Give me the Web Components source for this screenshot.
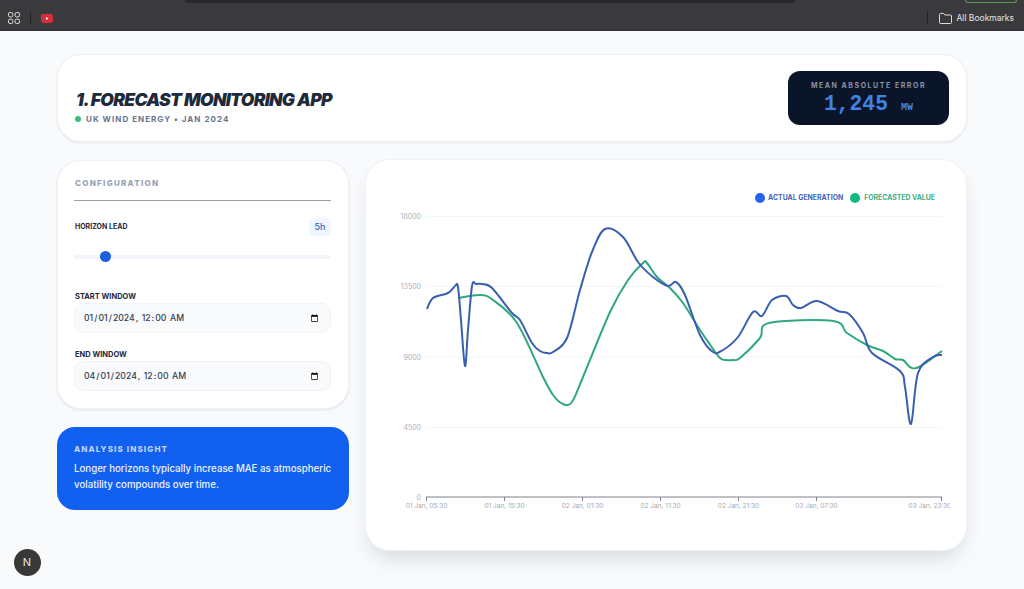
<!DOCTYPE html>
<html lang="en-US">
<head>
<meta charset="utf-8">
<title>Forecast Monitoring App</title>
<style>
  html, body { margin: 0; height: 589px; overflow: hidden; background: #f8fafc; font-family: Inter, "Liberation Sans", sans-serif; }
</style>
</head>
<body>
<bookmark-bar></bookmark-bar>
<app-page>
  <app-header title="1. FORECAST MONITORING APP" subtitle="UK WIND ENERGY • JAN 2024"></app-header>
  <div slot="side">
    <config-panel></config-panel>
    <insight-card heading="ANALYSIS INSIGHT">Longer horizons typically increase MAE as atmospheric volatility compounds over time.</insight-card>
  </div>
  <forecast-chart slot="main"></forecast-chart>
</app-page>
<dev-badge></dev-badge>

<script>
// browser chrome on top of the page
class BookmarkBar extends HTMLElement {
  connectedCallback() {
    this.attachShadow({ mode: 'open' }).innerHTML = `
      <style>
        :host { display: block; height: 31px; overflow: hidden; background: #3a3a3c; box-sizing: border-box; border-bottom: 1px solid #333335; color: #e4e4e6; font: 400 8.5px Inter, "Liberation Sans", sans-serif; }
        .strip { display: flex; height: 3px; }
        .omni { margin-left: 185px; width: 610px; background: #29292b; border-radius: 0 0 5px 5px; }
        .update { margin-left: 170px; width: 52px; height: 3px; box-sizing: border-box; border: 1px solid #5a9a5a; border-top: 0; border-radius: 0 0 3px 3px; }
        .row { display: flex; align-items: center; height: 26px; margin-top: 2px; padding: 0 10px 0 8px; }
        .sep { width: 1px; height: 12px; background: #222224; }
        .grow { flex: 1; }
        svg { display: block; }
      </style>
      <div class="strip"><div class="omni"></div><div class="update"></div></div>
      <div class="row">
        <svg width="12" height="12" viewBox="0 0 12 12" fill="none" stroke="#dcdcde" stroke-width="1">
          <rect x=".5" y=".5" width="4.4" height="4.4" rx="1.5"/><rect x="7.1" y=".5" width="4.4" height="4.4" rx="1.5"/>
          <rect x=".5" y="7.1" width="4.4" height="4.4" rx="1.5"/><rect x="7.1" y="7.1" width="4.4" height="4.4" rx="1.5"/>
        </svg>
        <div class="sep" style="margin-left:10px"></div>
        <svg style="margin-left:10px" width="12" height="9" viewBox="0 0 12 9">
          <rect width="12" height="9" rx="2.4" fill="#d92c3a"/><path d="M5 3l2.4 1.5L5 6z" fill="#fff"/>
        </svg>
        <div class="grow"></div>
        <div class="sep"></div>
        <svg style="margin-left:11px" width="13" height="11" viewBox="0 0 13 11" fill="none" stroke="#dcdcde" stroke-width="1">
          <path d="M.5 2V9.5a1 1 0 0 0 1 1h10a1 1 0 0 0 1-1V3a1 1 0 0 0-1-1H6L4.6.5H1.5a1 1 0 0 0-1 1z"/>
        </svg>
        <span style="margin-left:5px">All Bookmarks</span>
      </div>`;
  }
}

class AppPage extends HTMLElement {
  connectedCallback() {
    this.attachShadow({ mode: 'open' }).innerHTML = `
      <style>
        :host { display: block; padding: 23px 57px 0; }
        .cols { display: grid; grid-template-columns: 292px 600px; gap: 17px; margin-top: 18px; }
      </style>
      <slot></slot>
      <div class="cols"><slot name="side"></slot><slot name="main"></slot></div>`;
  }
}

class AppHeader extends HTMLElement {
  connectedCallback() {
    this.attachShadow({ mode: 'open' }).innerHTML = `
      <style>
        :host { display: flex; align-items: center; justify-content: space-between; box-sizing: border-box; width: 910px; height: 88px; padding: 0 17px 0 18px; background: #fff; border: 1px solid #eef1f5; border-radius: 24px; box-shadow: 0 1px 3px rgba(15,23,42,.08); }
        .head { padding-top: 19px; }
        h1 { margin: 0; font: italic 900 17.5px/20px Inter, "Liberation Sans", sans-serif; letter-spacing: -.04em; color: #1e293b; }
        .sub { display: flex; align-items: center; gap: 5px; margin-top: 3px; font: 700 8px/12px Inter, "Liberation Sans", sans-serif; letter-spacing: .13em; color: #64748b; }
        .dot { width: 6px; height: 6px; margin-left: -1px; border-radius: 50%; background: #34c17b; }
        .mae { box-sizing: border-box; width: 161px; height: 54px; padding-top: 10px; background: #0b1529; border-radius: 12px; text-align: center; }
        .mae small { display: block; font: 700 7px/9px Inter, "Liberation Sans", sans-serif; letter-spacing: .22em; color: #8a94a6; }
        .val { margin-top: 2px; font: 700 21.3px/24px "Liberation Mono", monospace; color: #3f83e6; }
        .val span { margin-left: 13px; font-size: 10px; }
      </style>
      <div class="head">
        <h1>${this.getAttribute('title')}</h1>
        <div class="sub"><i class="dot"></i>${this.getAttribute('subtitle')}</div>
      </div>
      <div class="mae"><small>MEAN ABSOLUTE ERROR</small><div class="val">1,245<span>MW</span></div></div>`;
  }
}

class DateField extends HTMLElement {
  connectedCallback() {
    this.attachShadow({ mode: 'open' }).innerHTML = `
      <style>
        :host { display: block; }
        label { display: block; padding-left: 1px; font: 700 7.5px/10px Inter, "Liberation Sans", sans-serif; color: #1e293b; margin-bottom: 1px; }
        input { display: block; box-sizing: border-box; width: 257px; height: 30px; padding: 0 9px 0 8px; background: #f8fafc; border: 1px solid #f1f3f6; border-radius: 10px; outline: 0; color: #334155; font: 500 8.7px Inter, "Liberation Sans", sans-serif; }
      </style>
      <label>${this.getAttribute('label')}</label>
      <input type="datetime-local" value="${this.getAttribute('value')}">`;
  }
}

class ConfigPanel extends HTMLElement {
  connectedCallback() {
    this.attachShadow({ mode: 'open' }).innerHTML = `
      <style>
        :host { display: block; box-sizing: border-box; height: 249px; padding: 16px 17px 17px 16px; background: #fff; border: 1px solid #eef1f5; border-radius: 24px; box-shadow: 0 1px 3px rgba(15,23,42,.1); }
        h2 { margin: 0; padding: 0 0 11px 1px; border-bottom: 1px solid #9a9ea6; font: 800 8px/12px Inter, "Liberation Sans", sans-serif; letter-spacing: .16em; color: #94a3b8; }
        .lead { display: flex; align-items: center; justify-content: space-between; margin-top: 17px; padding-left: 1px; font: 700 7px/10px Inter, "Liberation Sans", sans-serif; color: #1e293b; }
        .lead b { width: 22px; height: 18px; border-radius: 5px; background: #eff6ff; color: #2f5fc0; font: 500 9px/18px Inter, "Liberation Sans", sans-serif; text-align: center; }
        input { -webkit-appearance: none; appearance: none; display: block; width: 257px; height: 11px; margin: 15px 0 0; background: none; outline: 0; }
        input::-webkit-slider-runnable-track { height: 4px; border-radius: 2px; background: #f1f5f9; }
        input::-webkit-slider-thumb { -webkit-appearance: none; width: 11px; height: 11px; margin-top: -3.5px; border-radius: 50%; background: #1d5fe0; }
        .start { margin-top: 30px; }
        .end { margin-top: 17px; }
      </style>
      <h2>CONFIGURATION</h2>
      <div class="lead"><span>HORIZON LEAD</span><b>5h</b></div>
      <input type="range" min="0" max="48" value="5">
      <date-field class="start" label="START WINDOW" value="2024-01-01T00:00"></date-field>
      <date-field class="end" label="END WINDOW" value="2024-04-01T00:00"></date-field>`;
  }
}

class InsightCard extends HTMLElement {
  connectedCallback() {
    this.attachShadow({ mode: 'open' }).innerHTML = `
      <style>
        :host { display: block; box-sizing: border-box; height: 83px; margin-top: 18px; padding: 17px 17px 0; background: #1260f0; border-radius: 18px; color: #eaf1ff; }
        h3 { margin: 0 0 6px; font: 800 8px/11px Inter, "Liberation Sans", sans-serif; letter-spacing: .14em; color: #bcd3fb; }
        p { margin: 0; font: 500 9.7px/16px Inter, "Liberation Sans", sans-serif; }
      </style>
      <h3>${this.getAttribute('heading')}</h3>
      <p><slot></slot></p>`;
  }
}

// points read off in page pixels, the svg viewBox below uses the same numbers
const ACTUAL = [[427,309],[433,298],[448,293],[455,286],[458,287],[461,320],[465,366],[468,330],[472,286],[476,284],[482,284],[492,288],[512,313],[520,320],[532,343],[540,351],[547,353],[553,352],[567,338],[580,290],[592,252],[605,229],[623,237],[638,262],[653,277],[668,286],[676,282],[685,295],[700,335],[713,352],[723,350],[738,337],[753,312],[762,316],[772,300],[786,296],[793,305],[801,308],[817,301],[838,311],[849,314],[863,333],[872,353],[900,371],[905,387],[911,424],[918,373],[933,357],[942,355]];
const FORECAST = [[458,298],[480,295],[493,300],[517,323],[543,377],[553,395],[563,404],[572,402],[583,377],[610,312],[628,280],[643,263],[647,263],[657,277],[670,288],[683,303],[700,330],[711,346],[720,358],[726,360],[733,360],[740,358],[760,338],[769,323],[833,321],[847,333],[867,345],[883,351],[895,359],[903,360],[910,367],[919,367],[942,351]];

function smoothPath(pts) {
  let d = `M${pts[0][0]} ${pts[0][1]}`;
  for (let i = 0; i < pts.length - 1; i++) {
    const p0 = pts[i - 1] || pts[i], p1 = pts[i], p2 = pts[i + 1], p3 = pts[i + 2] || p2;
    const c1 = [p1[0] + (p2[0] - p0[0]) / 6, p1[1] + (p2[1] - p0[1]) / 6];
    const c2 = [p2[0] - (p3[0] - p1[0]) / 6, p2[1] - (p3[1] - p1[1]) / 6];
    d += `C${c1[0].toFixed(1)} ${c1[1].toFixed(1)} ${c2[0].toFixed(1)} ${c2[1].toFixed(1)} ${p2[0]} ${p2[1]}`;
  }
  return d;
}

class ForecastChart extends HTMLElement {
  connectedCallback() {
    const yTicks = [[18000, 216.5], [13500, 286.5], [9000, 357], [4500, 427.5]];
    // the last label sits left of its tick and runs into the clip, same as the reference
    const xTicks = [[426.5, '01 Jan, 05:30'], [504.5, '01 Jan, 15:30'], [582.5, '02 Jan, 01:30'], [660.5, '02 Jan, 11:30'], [738.5, '02 Jan, 21:30'], [816.5, '03 Jan, 07:30'], [941.5, '03 Jan, 23:30', 930]];
    const grid = yTicks.map(([v, y]) => `
      <line x1="426" x2="942" y1="${y}" y2="${y}" stroke="#f3f5f8"/>
      <text x="421" y="${y + 2.5}" text-anchor="end">${v}</text>`).join('');
    const ticks = xTicks.map(([x, t, tx]) => `
      <line x1="${x}" x2="${x}" y1="497" y2="501" stroke="#7d838c"/>
      <text x="${tx || x}" y="508" text-anchor="middle">${t}</text>`).join('');
    this.attachShadow({ mode: 'open' }).innerHTML = `
      <style>
        :host { display: block; box-sizing: border-box; height: 390px; background: #fff; border-radius: 24px; box-shadow: 0 0 0 1px #f0f2f6, 0 12px 22px -6px rgba(15,23,42,.16); overflow: hidden; }
        .legend { display: flex; justify-content: flex-end; align-items: center; height: 12px; padding: 32px 31px 0 0; font: 700 6.9px/12px Inter, "Liberation Sans", sans-serif; }
        .legend i { width: 10px; height: 10px; border-radius: 50%; margin-right: 3px; }
        .legend span + i { margin-left: 7px; margin-right: 4px; }
        svg { display: block; }
        text { font: 400 7px Inter, "Liberation Sans", sans-serif; fill: #a9b1bd; }
        .x text { fill: #a3a8b0; font-size: 6.5px; }
      </style>
      <div class="legend">
        <i style="background:#2563eb"></i><span style="color:#3f62bd">ACTUAL GENERATION</span>
        <i style="background:#10b981"></i><span style="color:#38b088">FORECASTED VALUE</span>
      </div>
      <svg width="600" height="346" viewBox="366 204 600 346">
        <defs><clipPath id="plot"><rect x="366" y="204" width="584" height="346"/></clipPath></defs>
        ${grid}
        <text x="421" y="499.5" text-anchor="end">0</text>
        <line x1="426" x2="942" y1="497" y2="497" stroke="#7d838c"/>
        <g class="x" clip-path="url(#plot)">${ticks}</g>
        <path d="${smoothPath(FORECAST)}" fill="none" stroke="#2fa77f" stroke-width="2"/>
        <path d="${smoothPath(ACTUAL)}" fill="none" stroke="#3a5fb0" stroke-width="2"/>
      </svg>`;
  }
}

class DevBadge extends HTMLElement {
  connectedCallback() {
    this.attachShadow({ mode: 'open' }).innerHTML = `
      <style>
        :host { position: fixed; left: 13.5px; top: 548.5px; width: 27px; height: 27px; border-radius: 50%; background: #383838; color: #e6e6e6; font: 400 11px/27px Inter, "Liberation Sans", sans-serif; text-align: center; }
      </style>N`;
  }
}

customElements.define('bookmark-bar', BookmarkBar);
customElements.define('app-page', AppPage);
customElements.define('app-header', AppHeader);
customElements.define('date-field', DateField);
customElements.define('config-panel', ConfigPanel);
customElements.define('insight-card', InsightCard);
customElements.define('forecast-chart', ForecastChart);
customElements.define('dev-badge', DevBadge);
</script>
</body>
</html>
